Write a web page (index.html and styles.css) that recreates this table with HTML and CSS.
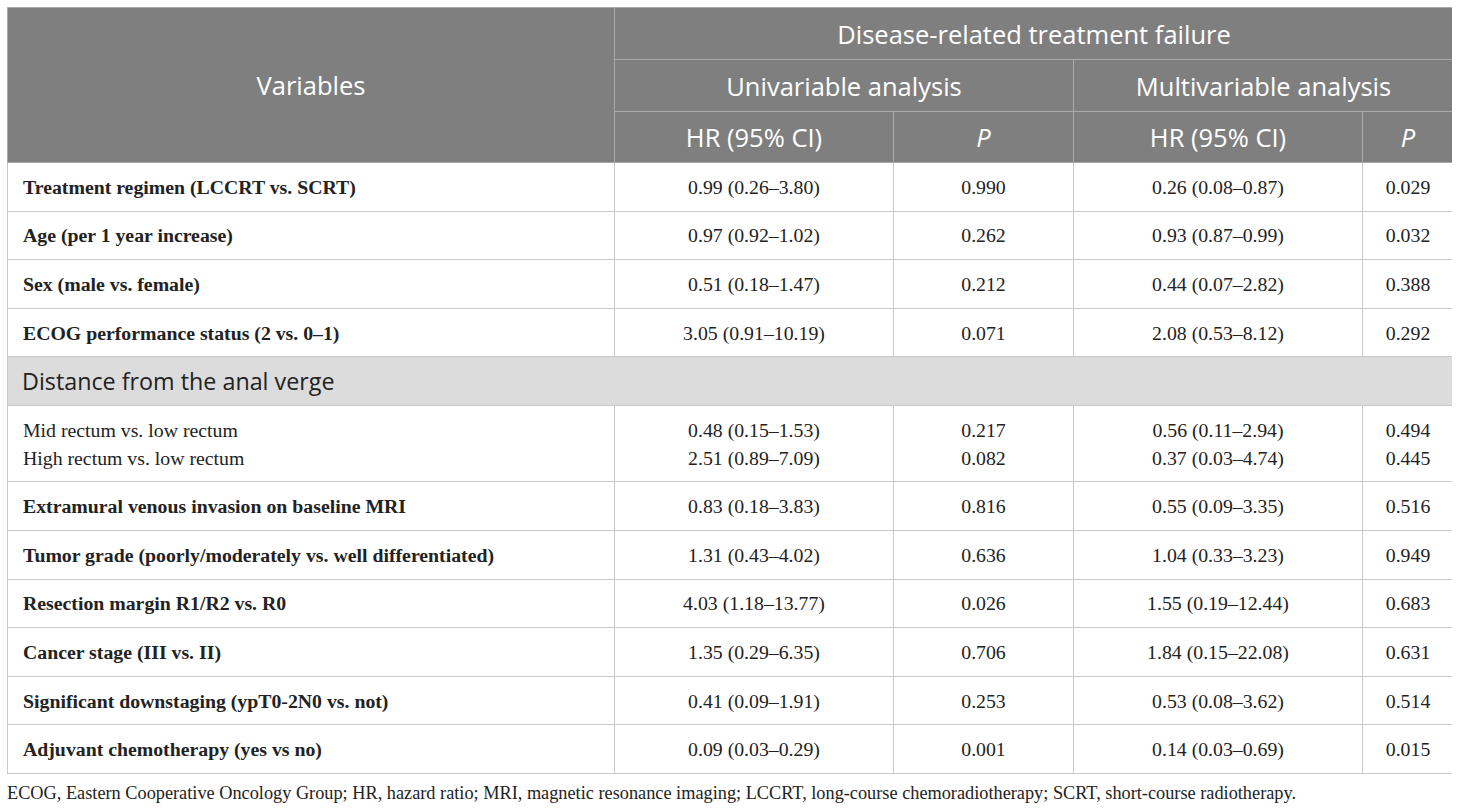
FILE: index.html
```html
<!DOCTYPE html>
<html lang="en">
  <head>
    <title>Disease-related treatment failure</title>
    <link rel="stylesheet" href="styles.css">
  </head>
  <body>
    <table class="results">
      <colgroup>
        <col class="c-var">
        <col class="c-hr">
        <col class="c-p">
        <col class="c-hr2">
        <col class="c-p2">
      </colgroup>
      <thead>
        <tr class="h1">
          <th rowspan="3">Variables</th>
          <th colspan="4">Disease-related treatment failure</th>
        </tr>
        <tr class="h2">
          <th colspan="2">Univariable analysis</th>
          <th colspan="2">Multivariable analysis</th>
        </tr>
        <tr class="h3">
          <th>HR (95% CI)</th>
          <th><i>P</i></th>
          <th>HR (95% CI)</th>
          <th><i>P</i></th>
        </tr>
      </thead>
      <tbody>
        <tr>
          <td class="label"><b>Treatment regimen (LCCRT vs. SCRT)</b></td>
          <td>0.99 (0.26–3.80)</td><td>0.990</td>
          <td>0.26 (0.08–0.87)</td><td>0.029</td>
        </tr>
        <tr>
          <td class="label"><b>Age (per 1 year increase)</b></td>
          <td>0.97 (0.92–1.02)</td><td>0.262</td>
          <td>0.93 (0.87–0.99)</td><td>0.032</td>
        </tr>
        <tr>
          <td class="label"><b>Sex (male vs. female)</b></td>
          <td>0.51 (0.18–1.47)</td><td>0.212</td>
          <td>0.44 (0.07–2.82)</td><td>0.388</td>
        </tr>
        <tr>
          <td class="label"><b>ECOG performance status (2 vs. 0–1)</b></td>
          <td>3.05 (0.91–10.19)</td><td>0.071</td>
          <td>2.08 (0.53–8.12)</td><td>0.292</td>
        </tr>
        <tr class="section">
          <td colspan="5">Distance from the anal verge</td>
        </tr>
        <tr class="double">
          <td class="label">Mid rectum vs. low rectum<br>High rectum vs. low rectum</td>
          <td>0.48 (0.15–1.53)<br>2.51 (0.89–7.09)</td>
          <td>0.217<br>0.082</td>
          <td>0.56 (0.11–2.94)<br>0.37 (0.03–4.74)</td>
          <td>0.494<br>0.445</td>
        </tr>
        <tr>
          <td class="label"><b>Extramural venous invasion on baseline MRI</b></td>
          <td>0.83 (0.18–3.83)</td><td>0.816</td>
          <td>0.55 (0.09–3.35)</td><td>0.516</td>
        </tr>
        <tr>
          <td class="label"><b>Tumor grade (poorly/moderately vs. well differentiated)</b></td>
          <td>1.31 (0.43–4.02)</td><td>0.636</td>
          <td>1.04 (0.33–3.23)</td><td>0.949</td>
        </tr>
        <tr>
          <td class="label"><b>Resection margin R1/R2 vs. R0</b></td>
          <td>4.03 (1.18–13.77)</td><td>0.026</td>
          <td>1.55 (0.19–12.44)</td><td>0.683</td>
        </tr>
        <tr>
          <td class="label"><b>Cancer stage (III vs. II)</b></td>
          <td>1.35 (0.29–6.35)</td><td>0.706</td>
          <td>1.84 (0.15–22.08)</td><td>0.631</td>
        </tr>
        <tr>
          <td class="label"><b>Significant downstaging (ypT0-2N0 vs. not)</b></td>
          <td>0.41 (0.09–1.91)</td><td>0.253</td>
          <td>0.53 (0.08–3.62)</td><td>0.514</td>
        </tr>
        <tr>
          <td class="label"><b>Adjuvant chemotherapy (yes vs no)</b></td>
          <td>0.09 (0.03–0.29)</td><td>0.001</td>
          <td>0.14 (0.03–0.69)</td><td>0.015</td>
        </tr>
      </tbody>
    </table>
    <p class="note">ECOG, Eastern Cooperative Oncology Group; HR, hazard ratio; MRI, magnetic resonance imaging; LCCRT, long-course chemoradiotherapy; SCRT, short-course radiotherapy.</p>
  </body>
</html>
```

FILE: styles.css
```css
body {
  margin: 7px 8px 0 7px;
  background: #fff;
  font-family: "Liberation Serif", "Times New Roman", serif;
  color: #222;
}

.results {
  width: 1446px;
  border-collapse: collapse;
  table-layout: fixed;
}

.c-var { width: 607px; }
.c-hr { width: 279px; }
.c-p { width: 180px; }
.c-hr2 { width: 289px; }
.c-p2 { width: 91px; }

th {
  background: #7f7f7f;
  color: #fff;
  font-family: "Open Sans", sans-serif;
  font-weight: 400;
  font-size: 25.5px;
  border: 1px solid #a9a9a9;
  padding: 0;
}

thead tr { height: 52px; }
.h3 { height: 51px; }

td {
  border: 1px solid #c9c9c9;
  font-size: 19.8px;
  text-align: center;
  height: 47.6px;
  padding: 0 10px;
  line-height: 28px;
}

td.label {
  text-align: left;
  padding-left: 15px;
}

.section td {
  background: #dcdcdc;
  text-align: left;
  font-family: "Open Sans", sans-serif;
  font-size: 23.3px;
  padding-left: 14px;
  height: 48px;
}

.double td { height: 75px; }

.note {
  margin: 9px 0 0 0;
  font-size: 18.3px;
  color: #222;
}
```
